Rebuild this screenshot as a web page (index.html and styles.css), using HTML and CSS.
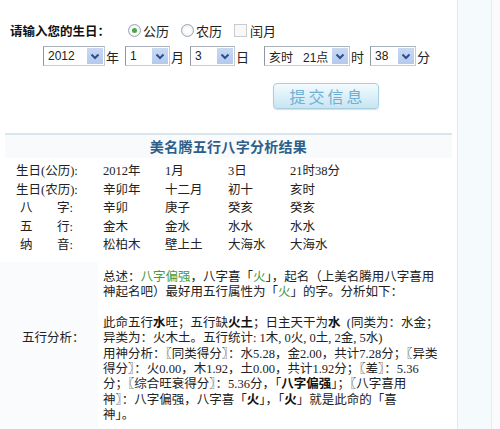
FILE: index.html
```html
<!DOCTYPE html>
<html lang="zh">
<head>
<meta charset="utf-8">
<link rel="stylesheet" href="styles.css">
</head>
<body>
<div class="page">
  <div class="main">
    <form class="form">
      <div class="row1">
        <span class="prompt">请输入您的生日：</span>
        <span class="opt opt-first"><span class="radio on"></span>公历</span>
        <span class="opt"><span class="radio"></span>农历</span>
        <span class="opt"><span class="check"></span>闰月</span>
      </div>
      <div class="row2">
        <span class="sel w62"><span class="val">2012</span><span class="arr"><svg viewBox="0 0 16 16" width="16" height="16"><path d="M4.5 6.5 L8 10 L11.5 6.5" fill="none" stroke="#2b4f8f" stroke-width="2"/></svg></span></span><span class="unit">年</span>
        <span class="sel w45"><span class="val">1</span><span class="arr"><svg viewBox="0 0 16 16" width="16" height="16"><path d="M4.5 6.5 L8 10 L11.5 6.5" fill="none" stroke="#2b4f8f" stroke-width="2"/></svg></span></span><span class="unit">月</span>
        <span class="sel w45"><span class="val">3</span><span class="arr"><svg viewBox="0 0 16 16" width="16" height="16"><path d="M4.5 6.5 L8 10 L11.5 6.5" fill="none" stroke="#2b4f8f" stroke-width="2"/></svg></span></span><span class="unit u-wide">日</span>
        <span class="sel w86"><span class="val">亥时&nbsp;&nbsp;&nbsp;21点</span><span class="arr"><svg viewBox="0 0 16 16" width="16" height="16"><path d="M4.5 6.5 L8 10 L11.5 6.5" fill="none" stroke="#2b4f8f" stroke-width="2"/></svg></span></span><span class="unit">时</span>
        <span class="sel w46"><span class="val">38</span><span class="arr"><svg viewBox="0 0 16 16" width="16" height="16"><path d="M4.5 6.5 L8 10 L11.5 6.5" fill="none" stroke="#2b4f8f" stroke-width="2"/></svg></span></span><span class="unit">分</span>
      </div>
      <div class="row3">
        <span class="submit">提交信息</span>
      </div>
    </form>

    <div class="result">
      <div class="title">美名腾五行八字分析结果</div>
      <div class="grid">
        <span class="lab">生日(公历):</span><span>2012年</span><span>1月</span><span>3日</span><span>21时38分</span>
        <span class="lab">生日(农历):</span><span>辛卯年</span><span>十二月</span><span>初十</span><span>亥时</span>
        <span class="lab sp"><i>八</i><i>字:</i></span><span>辛卯</span><span>庚子</span><span>癸亥</span><span>癸亥</span>
        <span class="lab sp"><i>五</i><i>行:</i></span><span>金木</span><span>金水</span><span>水水</span><span>水水</span>
        <span class="lab sp"><i>纳</i><i>音:</i></span><span>松柏木</span><span>壁上土</span><span>大海水</span><span>大海水</span>
      </div>
      <div class="analysis">
        <div class="a-label">五行分析：</div>
        <div class="a-text">
          <p>总述：<span class="g">八字偏强</span>，八字喜「<span class="g">火</span>」，起名（上美名腾用八字喜用<br>神起名吧）最好用五行属性为「<span class="g">火</span>」的字。分析如下：</p>
          <p>此命五行<b>水</b>旺；五行缺<b>火土</b>；日主天干为<b>水</b>&nbsp;&nbsp;(同类为：水金；<br>异类为：火木土。五行统计: 1木, 0火, 0土, 2金, 5水)<br>用神分析：〖同类得分〗：水5.28，金2.00，共计7.28分；〖异类<br>得分〗：火0.00，木1.92，土0.00，共计1.92分；〖差〗：5.36<br>分；〖综合旺衰得分〗：5.36分，「<b>八字偏强</b>」；〖八字喜用<br>神〗：八字偏强，八字喜「<b>火</b>」，「<b>火</b>」就是此命的「喜<br>神」。</p>
        </div>
      </div>
    </div>
  </div>
  <div class="side"></div>
  <div class="edge"></div>
</div>
</body>
</html>
```

FILE: styles.css
```css
html, body {
  margin: 0;
  padding: 0;
  background: #ffffff;
}
body {
  font-family: "Noto Sans CJK SC", "Liberation Sans", sans-serif;
  color: #222;
  font-size: 12px;
}
.page {
  display: flex;
  width: 500px;
  height: 429px;
  overflow: hidden;
}
.main {
  width: 457px;
  flex: none;
}
.side {
  width: 33px;
  flex: none;
  background: #f5fafc;
  border-left: 1px solid #d6edf1;
  border-right: 1px solid #e4edf1;
}
.edge {
  flex: 1;
  background: #fbfbfb;
}

/* form */
.form {
  margin: 0;
  padding-top: 21px;
  height: 112px;
}
.row1 {
  display: flex;
  align-items: center;
  height: 18px;
  padding-left: 10px;
}
.prompt {
  font-weight: bold;
  font-size: 12.5px;
  width: 118px;
  color: #111;
}
.opt {
  display: flex;
  align-items: center;
  font-size: 13px;
  color: #222;
  margin-right: 12px;
}
.radio {
  width: 11px;
  height: 11px;
  border-radius: 50%;
  border: 1px solid #9aa6b2;
  background: radial-gradient(circle, #ffffff 30%, #dfe5ea 100%);
  margin-right: 2px;
  position: relative;
}
.radio.on::after {
  content: "";
  position: absolute;
  left: 3px;
  top: 3px;
  width: 5px;
  height: 5px;
  border-radius: 50%;
  background: #45a845;
}
.check {
  width: 11px;
  height: 11px;
  border: 1px solid #c8ccd0;
  background: #f8f8f8;
  margin-right: 3px;
}
.row2 {
  display: flex;
  align-items: center;
  margin-top: 6px;
  padding-left: 43px;
  height: 22px;
}
.sel {
  display: flex;
  align-items: center;
  justify-content: space-between;
  height: 20px;
  box-sizing: border-box;
  border: 1px solid #c5ccd4;
  border-left-color: #8d97a2;
  border-top-color: #aab2bb;
  background: #fff;
  padding: 1px;
}
.w62 { width: 62px; }
.w45 { width: 45px; }
.w86 { width: 86px; }
.w46 { width: 46px; }
.val {
  font-family: "Liberation Sans", "Noto Sans CJK SC", sans-serif;
  font-size: 12px;
  padding-left: 3px;
  color: #222;
  white-space: nowrap;
}
.arr {
  width: 16px;
  height: 16px;
  background: linear-gradient(#c9d9f3, #b4c9ec);
  border: 0;
  display: flex;
}
.unit {
  font-size: 13px;
  width: 20px;
  padding-left: 1px;
  box-sizing: border-box;
}
.u-wide { width: 29px; }
.row3 {
  display: flex;
  padding-left: 273px;
  margin-top: 16px;
}
.submit {
  width: 106px;
  height: 26px;
  box-sizing: border-box;
  border: 1px solid #a8cfe0;
  border-radius: 4px;
  background: linear-gradient(#f4fbfe, #d8eef8 60%, #c8e5f3);
  box-shadow: 0 1px 1px rgba(150,190,210,0.5);
  color: #6fb0d2;
  font-size: 16px;
  letter-spacing: 3px;
  display: flex;
  align-items: center;
  justify-content: center;
  padding-left: 3px;
}

/* result */
.result {
  margin-left: 5px;
  width: 447px;
  border-top: 2px solid #d9e6ed;
  font-family: "Liberation Serif", "Noto Sans CJK SC", serif;
}
.title {
  background: #f8fafb;
  height: 23px;
  line-height: 23px;
  text-align: center;
  font-family: "Noto Sans CJK SC", sans-serif;
  font-weight: bold;
  font-size: 14px;
  color: #2d5e8b;
  letter-spacing: 0.3px;
}
.grid {
  display: grid;
  grid-template-columns: 87px 62px 63px 62px 100px;
  padding-left: 11px;
  padding-top: 4px;
  font-size: 12.5px;
  line-height: 18.6px;
  color: #222;
  padding-bottom: 7px;
}
.lab.sp {
  display: flex;
  padding-left: 4px;
}
.lab.sp i {
  font-style: normal;
  width: 37px;
}
.analysis {
  display: flex;
  margin-left: -5px;
}
.a-label {
  width: 98px;
  background: #fafbfd;
  display: flex;
  align-items: center;
  padding-left: 22px;
  padding-bottom: 20px;
  box-sizing: border-box;
  font-size: 12.5px;
  font-family: "Noto Sans CJK SC", sans-serif;
}
.a-text {
  padding-left: 5px;
  padding-top: 8px;
  padding-bottom: 8px;
  font-size: 12.5px;
  line-height: 15.4px;
  white-space: nowrap;
  color: #222;
}
.a-text p {
  margin: 0 0 15px 0;
}
.a-text p:last-child {
  margin-bottom: 0;
}
.g {
  color: #4a9a3a;
}
b {
  font-weight: bold;
  color: #111;
}
```
